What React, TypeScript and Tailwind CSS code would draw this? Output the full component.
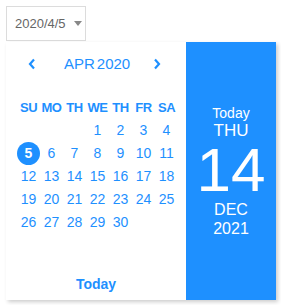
import React from "react";

const BLUE = "#1e90ff";

function Chevron({ dir }: { dir: "left" | "right" }) {
  return (
    <svg width="8" height="12" viewBox="0 0 8 12" className="block shrink-0">
      {dir === "left" ? (
        <polyline points="6,1.5 2,6 6,10.5" fill="none" stroke={BLUE} strokeWidth="2.2" />
      ) : (
        <polyline points="2,1.5 6,6 2,10.5" fill="none" stroke={BLUE} strokeWidth="2.2" />
      )}
    </svg>
  );
}

export default function App() {
  const weekdays = ["SU", "MO", "TH", "WE", "TH", "FR", "SA"];
  const cells: (number | null)[] = [null, null, null];
  for (let d = 1; d <= 30; d++) cells.push(d);

  return (
    <div
      className="p-[6px] bg-white w-[281px] h-[305px]"
      style={{ fontFamily: '"Liberation Sans", Arial, sans-serif' }}
    >
      <div className="w-[80px] h-[35px] border border-[#dcdcdc] flex items-center pl-[8px] gap-[8px]">
        <span className="text-[13px] text-[#666]">2020/4/5</span>
        <svg width="8" height="5" viewBox="0 0 8 5">
          <polygon points="0,0 8,0 4,5" fill="#888" />
        </svg>
      </div>
      <div className="mt-[1px] w-[270px] h-[258px] flex shadow-[2px_2px_4px_rgba(0,0,0,0.2)]">
        <div className="w-[180px] bg-white flex flex-col">
          <div className="mt-[10px] h-[24px] flex items-center pl-[22px]">
            <Chevron dir="left" />
            <div className="ml-[28px] flex gap-[2px] text-[15px]" style={{ color: BLUE }}>
              <span>APR</span>
              <span>2020</span>
            </div>
            <div className="ml-[23px]">
              <Chevron dir="right" />
            </div>
          </div>
          <div className="mt-[20px] pl-[11px] grid grid-cols-[repeat(7,23px)]">
            {weekdays.map((w, i) => (
              <div
                key={i}
                className="h-[23px] flex items-center justify-center text-[13px] font-bold tracking-[-0.5px]"
                style={{ color: BLUE }}
              >
                {w}
              </div>
            ))}
            {cells.map((d, i) => (
              <div key={i} className="h-[23px] flex items-center justify-center text-[14px]" style={{ color: BLUE }}>
                {d === 5 ? (
                  <span className="w-[23px] h-[23px] rounded-full flex items-center justify-center text-white font-bold" style={{ backgroundColor: BLUE }}>
                    5
                  </span>
                ) : (
                  d
                )}
              </div>
            ))}
          </div>
          <div className="mt-auto h-[32px] flex items-center justify-center text-[14px] font-bold" style={{ color: BLUE }}>
            Today
          </div>
        </div>
        <div className="w-[90px] flex flex-col items-center justify-center text-white" style={{ backgroundColor: BLUE }}>
          <div className="text-[14px] leading-[17px]">Today</div>
          <div className="text-[17px] leading-[18px]">THU</div>
          <div className="text-[62px] leading-[60px]">14</div>
          <div className="text-[16px] leading-[19px]">DEC</div>
          <div className="text-[16px] leading-[19px]">2021</div>
        </div>
      </div>
    </div>
  );
}
